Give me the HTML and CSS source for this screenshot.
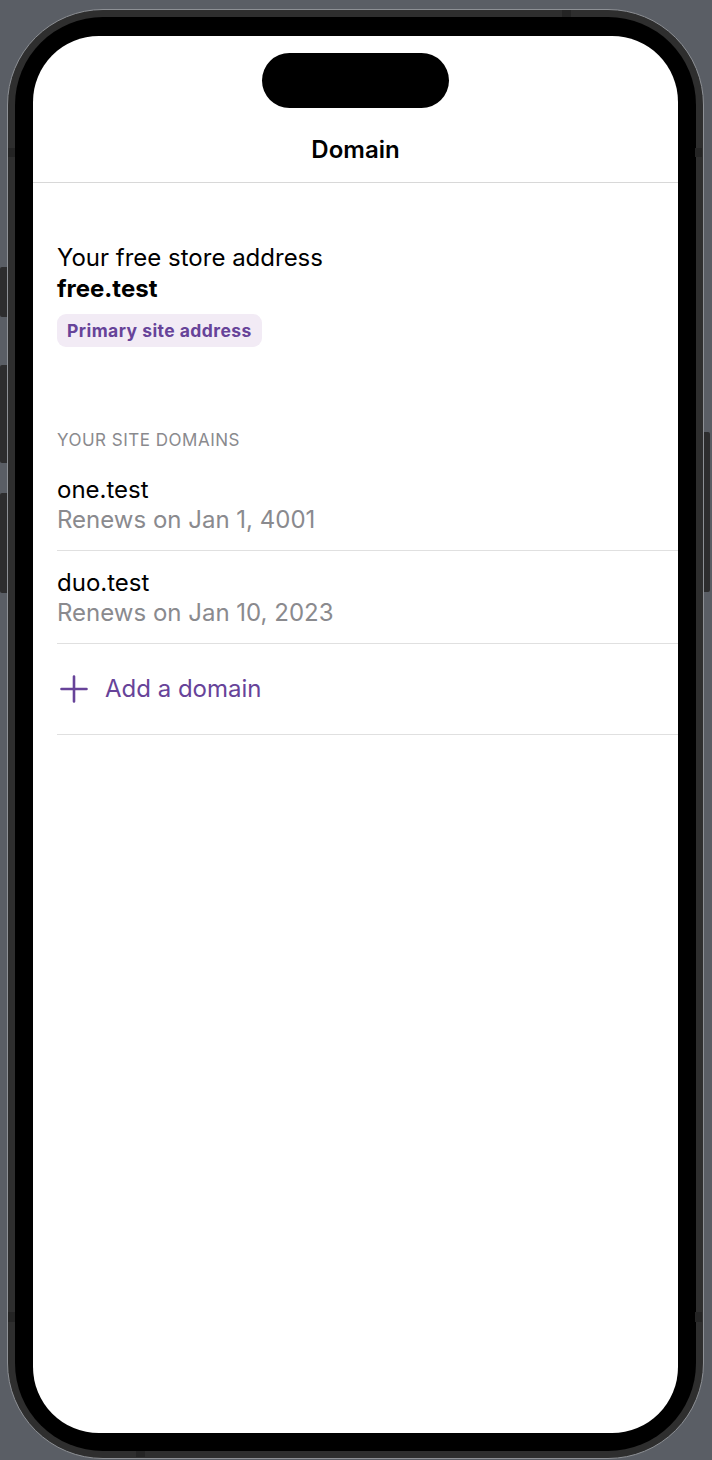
FILE: index.html
```html
<!DOCTYPE html>
<html lang="en">
<head>
<meta charset="utf-8">
<title>Domain</title>
<link rel="stylesheet" href="styles.css">
</head>
<body>
<div class="stage">
  <div class="btn btn-action"></div>
  <div class="btn btn-vol-up"></div>
  <div class="btn btn-vol-down"></div>
  <div class="btn btn-power"></div>
  <div class="band band-l1"></div>
  <div class="band band-l2"></div>
  <div class="band band-r1"></div>
  <div class="band band-r2"></div>
  <div class="band band-t"></div>
  <div class="band band-b"></div>

  <div class="frame">
    <div class="bezel">
      <div class="screen">
        <div class="island"></div>
        <header class="nav">
          <h1 class="nav-title">Domain</h1>
        </header>
        <main class="content">
          <section class="free">
            <p class="free-label">Your free store address</p>
            <p class="free-domain">free.test</p>
            <span class="badge">Primary site address</span>
          </section>
          <section class="domains">
            <h2 class="section-header">YOUR SITE DOMAINS</h2>
            <ul class="list">
              <li class="row">
                <span class="row-title">one.test</span>
                <span class="row-sub">Renews on Jan 1, 4001</span>
              </li>
              <li class="row">
                <span class="row-title">duo.test</span>
                <span class="row-sub">Renews on Jan 10, 2023</span>
              </li>
              <li class="add-row">
                <svg class="plus" viewBox="0 0 28 28" width="28" height="28" aria-hidden="true">
                  <path d="M14 1.5V26.5M1.5 14H26.5" stroke="#674399" stroke-width="2.6" stroke-linecap="round" fill="none"/>
                </svg>
                <span class="add-label">Add a domain</span>
              </li>
            </ul>
          </section>
        </main>
      </div>
    </div>
  </div>
</div>
</body>
</html>
```

FILE: styles.css
```css
* {
  box-sizing: border-box;
}

html,
body {
  margin: 0;
  padding: 0;
}

body {
  background: #5a5e65;
  font-family: Inter, "Noto Sans", "Liberation Sans", sans-serif;
  width: 712px;
  height: 1460px;
  overflow: hidden;
}

.stage {
  position: relative;
  width: 712px;
  height: 1460px;
  padding: 9px 0 0 7px;
}

/* side buttons (decorative, on the device canvas) */
.btn {
  position: absolute;
  background: #2d2d2e;
  width: 7px;
}

.btn-action {
  left: 0;
  top: 267px;
  height: 50px;
  border-radius: 2px 0 0 2px;
}

.btn-vol-up {
  left: 0;
  top: 365px;
  height: 98px;
  border-radius: 2px 0 0 2px;
}

.btn-vol-down {
  left: 0;
  top: 493px;
  height: 100px;
  border-radius: 2px 0 0 2px;
}

.btn-power {
  left: 704px;
  top: 432px;
  height: 160px;
  width: 6px;
  border-radius: 0 2px 2px 0;
}

.band {
  position: absolute;
  background: #242424;
  z-index: 2;
}

.band-l1 { left: 8px; top: 148px; width: 7px; height: 9px; }
.band-l2 { left: 8px; top: 1312px; width: 7px; height: 10px; }
.band-r1 { left: 695px; top: 148px; width: 7px; height: 9px; }
.band-r2 { left: 695px; top: 1312px; width: 7px; height: 10px; }
.band-t { left: 562px; top: 10px; width: 9px; height: 7px; }
.band-b { left: 136px; top: 1451px; width: 9px; height: 6px; }

.frame {
  position: relative;
  width: 697px;
  height: 1450px;
  padding: 7px;
  background: #2e2e2e;
  border: 1px solid #8d9095;
  border-radius: 96px;
}

.bezel {
  width: 100%;
  height: 100%;
  padding: 19px 18px 18px 18px;
  background: #000;
  border-radius: 88px;
}

.screen {
  position: relative;
  width: 645px;
  height: 1397px;
  background: #fff;
  border-radius: 66px;
  overflow: hidden;
}

.island {
  position: absolute;
  left: 229px;
  top: 17px;
  width: 187px;
  height: 55px;
  background: #000;
  border-radius: 28px;
}

.nav {
  padding: 99px 0 18px;
  border-bottom: 1px solid #d8d8d8;
  text-align: center;
}

.nav-title {
  margin: 0;
  font-size: 24px;
  line-height: 29px;
  font-weight: 600;
  color: #000;
}

.content {
  padding-left: 24px;
}

.free {
  padding-top: 59px;
}

.free-label,
.free-domain {
  margin: 0;
  font-size: 24px;
  line-height: 31px;
  color: #000;
}

.free-domain {
  font-weight: 700;
}

.badge {
  display: inline-block;
  margin-top: 10px;
  padding: 6px 10px;
  font-size: 17.5px;
  line-height: 21px;
  font-weight: 700;
  letter-spacing: 0.45px;
  color: #674399;
  background: #f2ebf5;
  border-radius: 9px;
}

.domains {
  padding-top: 82px;
}

.section-header {
  margin: 0 0 7px;
  font-size: 17px;
  line-height: 22px;
  font-weight: 400;
  color: #8a8a8e;
  letter-spacing: 0.5px;
}

.list {
  list-style: none;
  margin: 0;
  padding: 0;
}

.row {
  display: flex;
  flex-direction: column;
  padding: 17px 0 15px;
  border-bottom: 1px solid #e0e0e0;
}

.row-title {
  font-size: 24px;
  line-height: 30px;
  color: #000;
}

.row-sub {
  font-size: 24px;
  line-height: 30px;
  color: #8a8a8e;
}

.add-row {
  display: flex;
  align-items: center;
  gap: 17px;
  height: 91px;
  padding-left: 3px;
  border-bottom: 1px solid #e0e0e0;
}

.plus {
  flex: none;
}

.add-label {
  font-size: 24px;
  line-height: 30px;
  color: #674399;
}
```
